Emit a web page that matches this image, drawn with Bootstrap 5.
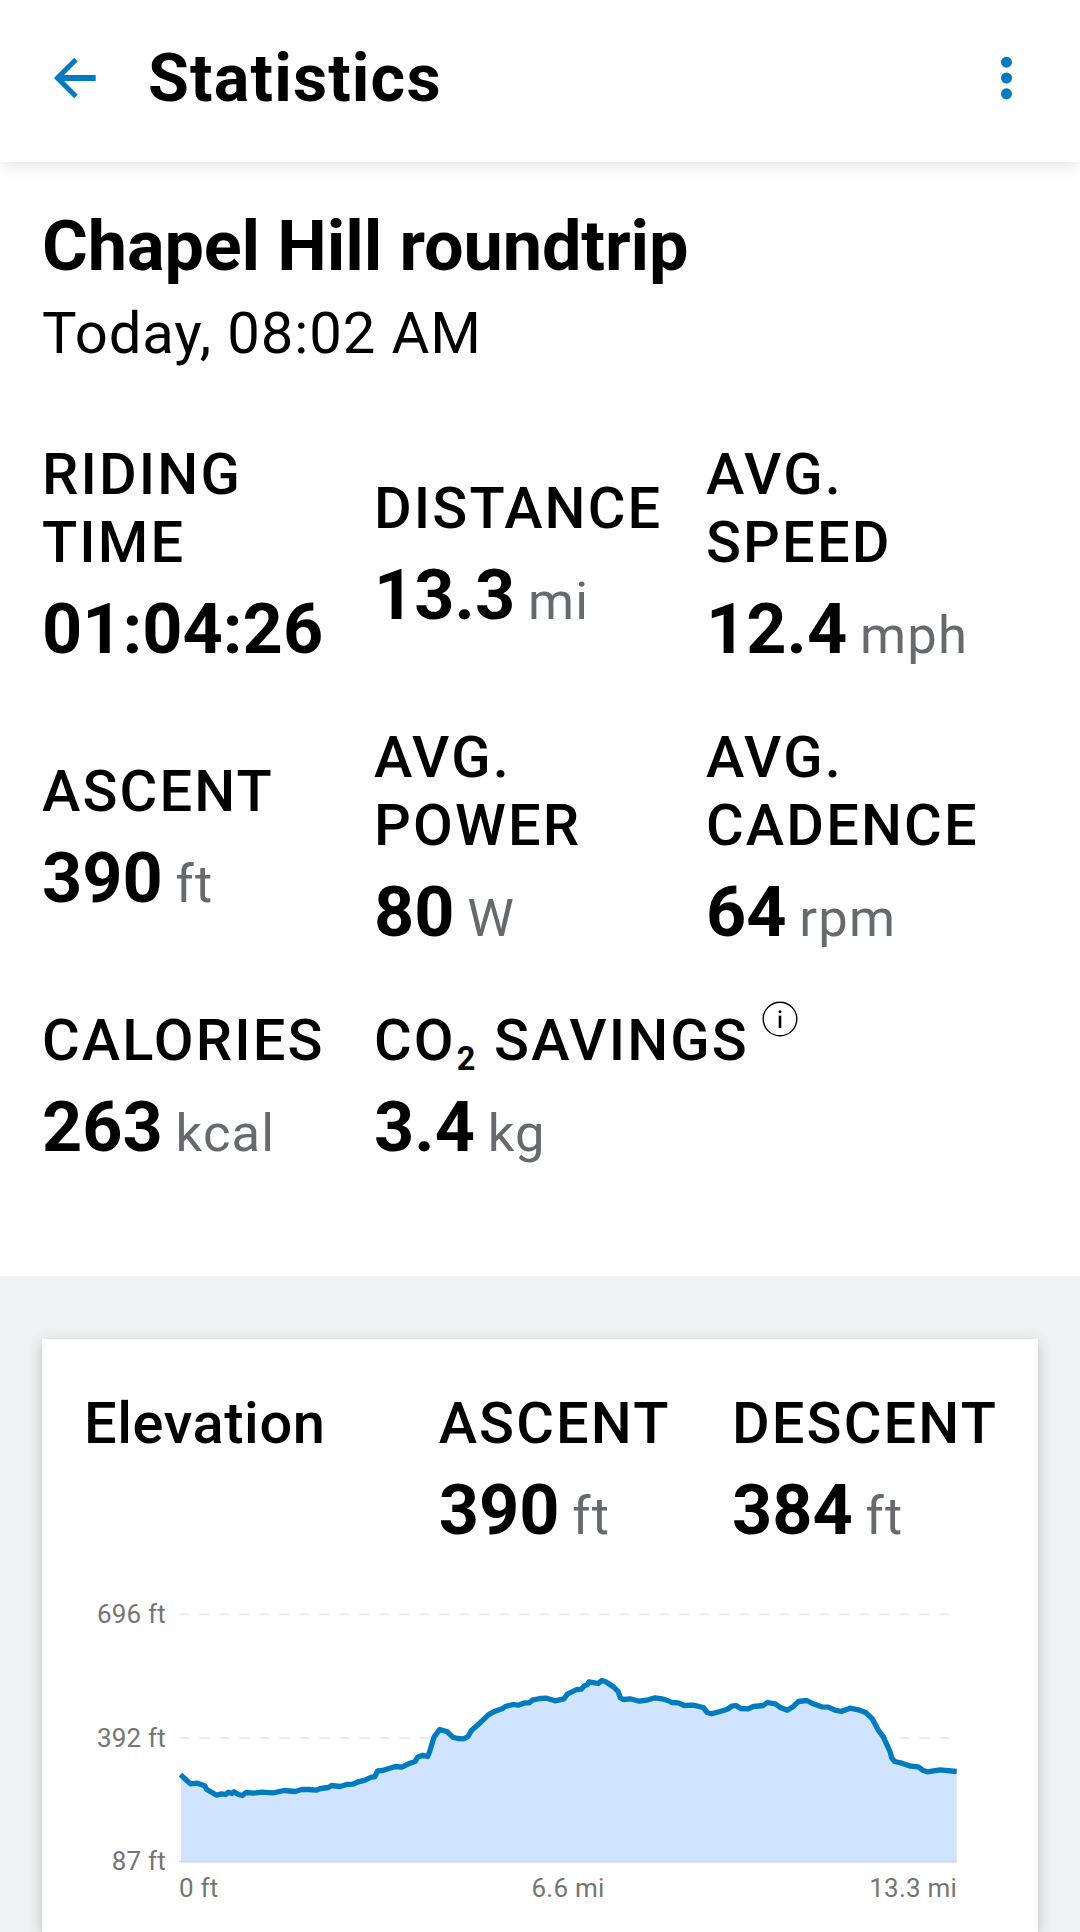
<!DOCTYPE html>
<html lang="en">
<head>
<meta charset="utf-8">
<meta name="viewport" content="width=device-width, initial-scale=1">
<title>Statistics</title>
<link href="https://cdn.jsdelivr.net/npm/bootstrap@5.3.0/dist/css/bootstrap.min.css" rel="stylesheet">
<style>
body { font-family: Roboto, "Liberation Sans", sans-serif; color: #000; background: #fff; height: 1932px; overflow: hidden; }
.app-bar { height: 162px; padding: 0 67px 6px 52px; box-shadow: 0 4px 15px rgba(0,0,0,.1); position: relative; z-index: 1; }
.app-title { font-size: 66.5px; font-weight: 700; letter-spacing: 1.15px; line-height: 78px; margin-left: 50px; }
.icon-btn { background: none; border: 0; padding: 0; line-height: 0; color: #007bc0; }
.summary { padding: 43px 42px 108px; }
.ride-name { font-size: 70.2px; font-weight: 700; line-height: 82px; margin: 0 0 12px; letter-spacing: -.12px; }
.ride-date { font-size: 58px; line-height: 68px; letter-spacing: .9px; margin: 0 0 73px; }
.stat-grid { row-gap: 53px; }
.stat-label { font-size: 57.75px; font-weight: 500; line-height: 68px; letter-spacing: 2.15px; margin-bottom: 12px; }
.stat-label sub { font-size: 32.5px; font-weight: 700; line-height: 0; bottom: -10px; vertical-align: baseline; margin-left: 1px; }
.stat-value { font-size: 70.2px; font-weight: 700; line-height: 82px; white-space: nowrap; }
.unit { font-size: 52.5px; font-weight: 400; letter-spacing: 1.2px; line-height: 1; color: #656a6f; margin-left: 12.8px; }
.info-icon { margin: -5px 0 0 13px; }
.panel-area { background: #eff1f2; padding: 63px 42px 0; }
.panel-card { padding: 50px 42px 0; border: 0; border-radius: 0; color: #000; box-shadow: 0 4px 13px rgba(40,50,60,.24); }
.card-heading { font-size: 57.75px; font-weight: 500; line-height: 68px; letter-spacing: .6px; margin: 0; }
.panel-stats { column-gap: 61.5px; margin-right: -2px; }
.axis { font-size: 26px; line-height: 30px; letter-spacing: .2px; color: #757575; }
.chart-row { margin-top: 48px; height: 277px; }
.axis-y { width: 82px; margin-right: 13px; }
.axis-x { margin: -3px 39px 0 95px; }
</style>
</head>
<body class="d-flex flex-column">
<header class="app-bar d-flex align-items-center bg-white">
  <button class="icon-btn" aria-label="Back">
    <svg width="46" height="46" viewBox="0 0 46 46" fill="none" stroke="currentColor"><path d="M24 4.5 5.5 23 24 41.5" stroke-width="5"/><path d="M6 23H43.7" stroke-width="6"/></svg>
  </button>
  <h1 class="app-title mb-0">Statistics</h1>
  <button class="icon-btn ms-auto" aria-label="More options">
    <svg width="13" height="46" viewBox="0 0 13 46" fill="currentColor"><circle cx="6.5" cy="7.2" r="5.5"/><circle cx="6.5" cy="23" r="5.5"/><circle cx="6.5" cy="38.8" r="5.5"/></svg>
  </button>
</header>

<main class="d-flex flex-column flex-fill">
  <section class="summary">
    <h2 class="ride-name">Chapel Hill roundtrip</h2>
    <p class="ride-date">Today, 08:02 AM</p>
    <div class="row g-0 align-items-center stat-grid">
      <div class="col-4"><div class="stat-label">RIDING<br>TIME</div><div class="stat-value">01:04:26</div></div>
      <div class="col-4"><div class="stat-label">DISTANCE</div><div class="stat-value">13.3<span class="unit">mi</span></div></div>
      <div class="col-4"><div class="stat-label">AVG.<br>SPEED</div><div class="stat-value">12.4<span class="unit">mph</span></div></div>
      <div class="col-4"><div class="stat-label">ASCENT</div><div class="stat-value">390<span class="unit">ft</span></div></div>
      <div class="col-4"><div class="stat-label">AVG.<br>POWER</div><div class="stat-value">80<span class="unit">W</span></div></div>
      <div class="col-4"><div class="stat-label">AVG.<br>CADENCE</div><div class="stat-value">64<span class="unit">rpm</span></div></div>
      <div class="col-4"><div class="stat-label">CALORIES</div><div class="stat-value">263<span class="unit">kcal</span></div></div>
      <div class="col-8">
        <div class="d-flex align-items-start">
          <div class="stat-label">CO<sub>2</sub> SAVINGS</div>
          <svg class="info-icon" width="36" height="36" viewBox="0 0 36 36" fill="none" stroke="#000"><circle cx="18" cy="18" r="16.8" stroke-width="1.4"/><path d="M18 14.6V27" stroke-width="2.6"/><circle cx="18" cy="10.7" r="1.5" fill="#000" stroke="none"/></svg>
        </div>
        <div class="stat-value">3.4<span class="unit">kg</span></div>
      </div>
    </div>
  </section>

  <section class="panel-area d-flex flex-column flex-fill">
    <div class="card panel-card flex-fill">
      <div class="d-flex panel-stats">
        <h3 class="card-heading">Elevation</h3>
        <div class="ms-auto"><div class="stat-label">ASCENT</div><div class="stat-value">390<span class="unit">ft</span></div></div>
        <div><div class="stat-label">DESCENT</div><div class="stat-value">384<span class="unit">ft</span></div></div>
      </div>
      <div class="d-flex chart-row">
        <div class="axis axis-y d-flex flex-column justify-content-between text-end"><span>696 ft</span><span>392 ft</span><span>87 ft</span></div>
        <svg width="778" height="277" viewBox="0 0 778 277">
          <g transform="translate(-179 -1599.5)">
            <g fill="none" stroke="#e9e9e9" stroke-width="1.8" stroke-dasharray="10 10"><path d="M179.3 1614.8H950"/><path d="M179.3 1738.4H950"/></g>
            <path fill="#d0e4ff" d="M181 1863V1776L186.7 1781 190.5 1784.3 197.3 1783.7 204.7 1786.3 206.7 1790 212 1793 216.7 1795.7 221.3 1794.3 225.7 1795 228.3 1792.7 232 1794 234 1792.3 238.3 1795 242.3 1796 246 1793 253.3 1793.7 261.7 1792.7 273.3 1793.3 284 1791 295 1792 301.7 1790 316 1790.7 328.3 1788 331.7 1786 340 1787 352.7 1784.7 358.3 1782.3 365 1780.7 371.3 1777.7 374.7 1777.3 377.7 1771.3 395.3 1767 402 1767.7 415 1762 422.7 1755.7 427.7 1757 434 1737.7 439.7 1730 447.3 1732.3 452.7 1737.7 464 1739.3 468 1737 471.7 1730.7 488.3 1715.3 502.7 1709 513.3 1705 529.3 1703.3 546.7 1698.7 555 1701.3 564 1699.3 567.3 1694.7 581.3 1689.7 589 1682.3 598.3 1684 601.7 1681 614 1687.7 618.3 1692.3 623.3 1700 639.3 1701.7 655 1698.3 671.7 1703 684.3 1706 703.3 1708 711.7 1714.3 727.3 1709.7 736 1706 748.3 1709.3 763.3 1706 767.3 1703 775.3 1704.3 787.3 1710.7 798.3 1702 806.7 1701 821.7 1707.3 841.3 1712 850 1708.7 865.7 1713 872.3 1719.3 883.3 1737.3 890 1752 894.7 1762 910.7 1766.7 927.3 1772.3 956.7 1772V1863Z"/>
            <path stroke="#c8d4e8" stroke-width="1.6" d="M179.3 1862H956.7"/>
            <path fill="none" stroke="#007bc0" stroke-width="5.3" stroke-linejoin="round" d="M180.5 1775 181.5 1776 186.7 1781 190.5 1784.3 197.3 1783.7 204.7 1786.3 206.7 1790 212 1793 216.7 1795.7 221.3 1794.3 225.7 1795 228.3 1792.7 232 1794 234 1792.3 238.3 1795 242.3 1796 246 1793 253.3 1793.7 261.7 1792.7 273.3 1793.3 284 1791 295 1792 301.7 1790 309.3 1790 316 1790.7 320.7 1789 328.3 1788 331.7 1786 340 1787 346.7 1785 352.7 1784.7 358.3 1782.3 365 1780.7 371.3 1777.7 374.7 1777.3 377.7 1771.3 382.7 1771 395.3 1767 402 1767.7 410 1763.7 415 1762 417.7 1757.7 422.7 1755.7 427.7 1757 429.3 1753.3 434 1737.7 439.7 1730 447.3 1732.3 452.7 1737.7 457.7 1739 464 1739.3 468 1737 471.7 1730.7 478.3 1725 488.3 1715.3 495 1711.7 502.7 1709 505.3 1707 513.3 1705 518.3 1705.7 525 1703.3 529.3 1703.3 532.3 1700.7 540 1699 546.7 1698.7 555 1701.3 564 1699.3 567.3 1694.7 576.7 1690 581.3 1689.7 584.3 1686.3 587.3 1685.3 589 1682.3 598.3 1684 601.7 1681 605.3 1682 614 1687.7 618.3 1692.3 620.3 1698.3 623.3 1700 630 1699.3 639.3 1701.7 648.3 1700.3 655 1698.3 661.7 1699.3 667.7 1701 671.7 1703 678.3 1703.3 684.3 1706 693.3 1705.7 703.3 1708 707.3 1713 711.7 1714.3 720 1712 727.3 1709.7 731.7 1706.7 736 1706 740.7 1709 748.3 1709.3 753.3 1707 763.3 1706 767.3 1703 775.3 1704.3 781 1708.3 787.3 1710.7 793.7 1706.7 798.3 1702 806.7 1701 813.3 1704.3 821.7 1707.3 828.3 1707.7 835 1710.7 841.3 1712 850 1708.7 858.3 1710.3 865.7 1713 872.3 1719.3 878.3 1730.7 883.3 1737.3 890 1752 891.7 1758.3 894.7 1762 901.7 1763.7 910.7 1766.7 918.3 1767.3 922.7 1770.7 927.3 1772.3 940 1770.3 956.7 1772"/>
          </g>
        </svg>
      </div>
      <div class="axis axis-x row g-0"><span class="col">0 ft</span><span class="col text-center">6.6 mi</span><span class="col text-end">13.3 mi</span></div>
    </div>
  </section>
</main>
<script src="https://cdn.jsdelivr.net/npm/bootstrap@5.3.0/dist/js/bootstrap.bundle.min.js"></script>
</body>
</html>
